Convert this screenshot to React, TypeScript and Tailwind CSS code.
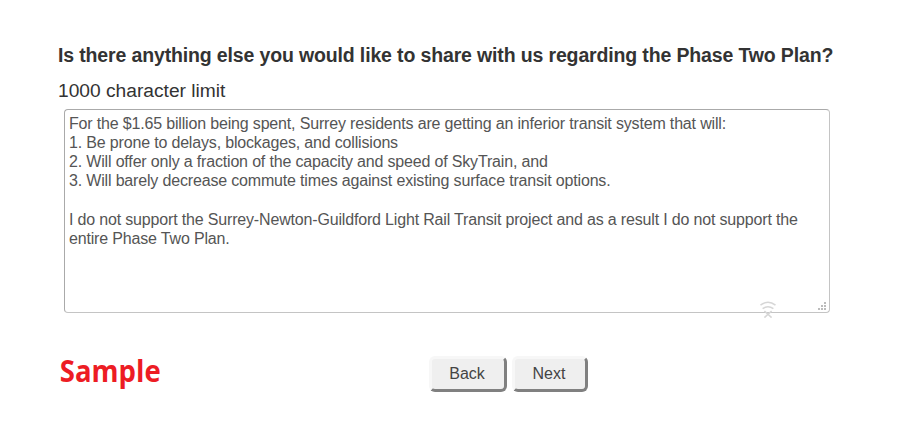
import React from 'react';

const response = `For the $1.65 billion being spent, Surrey residents are getting an inferior transit system that will:
1. Be prone to delays, blockages, and collisions
2. Will offer only a fraction of the capacity and speed of SkyTrain, and
3. Will barely decrease commute times against existing surface transit options.

I do not support the Surrey-Newton-Guildford Light Rail Transit project and as a result I do not support the
entire Phase Two Plan.`;

const SignalIcon = () => (
  <svg className="h-[17px] w-4" viewBox="0 0 16 17" fill="none" stroke="#d6d6d6" strokeWidth="1.6">
    <path d="M0.5 4.2Q8 -1.6 15.5 4.2" />
    <path d="M2.6 7.7Q8 3.7 13.4 7.7" />
    <path d="M4.4 10l7.2 6.6M11.6 10l-7.2 6.6" />
  </svg>
);

const ResizeGrip = () => (
  <svg className="block w-2 h-2" viewBox="0 0 8 8" fill="#bcbcbc" shapeRendering="crispEdges">
    <path d="M6 0h2v2h-2zM3 3h2v2h-2zM6 3h2v2h-2zM0 6h2v2h-2zM3 6h2v2h-2zM6 6h2v2h-2z" />
  </svg>
);

const buttonClass =
  'h-[36px] rounded-[6px] border-[3px] border-t-[#f7f7f7] border-l-[#f7f7f7] border-r-[#808080] border-b-[#808080] bg-[#efefef] pr-[2px] text-[16px] leading-[30px] text-[#444444]';

export default function App() {
  return (
    <main className="h-[441px] w-[910px] overflow-hidden bg-white pl-[58px] pt-[43px] font-['Liberation_Sans',Arial,sans-serif]">
      <h1 className="whitespace-nowrap text-[19.5px] font-bold leading-6 tracking-[-0.145px] text-[#333333]">
        Is there anything else you would like to share with us regarding the Phase Two Plan?
      </h1>
      <p className="mt-3 text-[19.2px] leading-6 text-[#333333]">1000 character limit</p>
      <div className="relative ml-[6px] mt-[6px] h-[204px] w-[766px]">
        <textarea
          className="block h-full w-full resize-none overflow-hidden rounded-[4px] border border-t-[#aaaaaa] border-l-[#aaaaaa] border-r-[#c4c4c4] border-b-[#c4c4c4] px-1 pt-[3.7px] text-[16px] leading-[19.2px] tracking-[-0.17px] text-[#555555] outline-none"
          defaultValue={response}
          spellCheck={false}
        />
        <span className="absolute left-[696px] top-[192px]">
          <SignalIcon />
        </span>
        <span className="absolute bottom-[3px] right-[4px]">
          <ResizeGrip />
        </span>
      </div>
      <div className="mt-[43px] flex items-start">
        <span className="w-[371px] origin-left scale-x-[0.917] pl-[2px] font-['Open_Sans',sans-serif] text-[30px] font-bold leading-[30px] text-[#ed1c24]">
          Sample
        </span>
        <div className="flex gap-[5px]">
          <button className={buttonClass + ' w-[78px]'}>Back</button>
          <button className={buttonClass + ' w-[76px]'}>Next</button>
        </div>
      </div>
    </main>
  );
}
